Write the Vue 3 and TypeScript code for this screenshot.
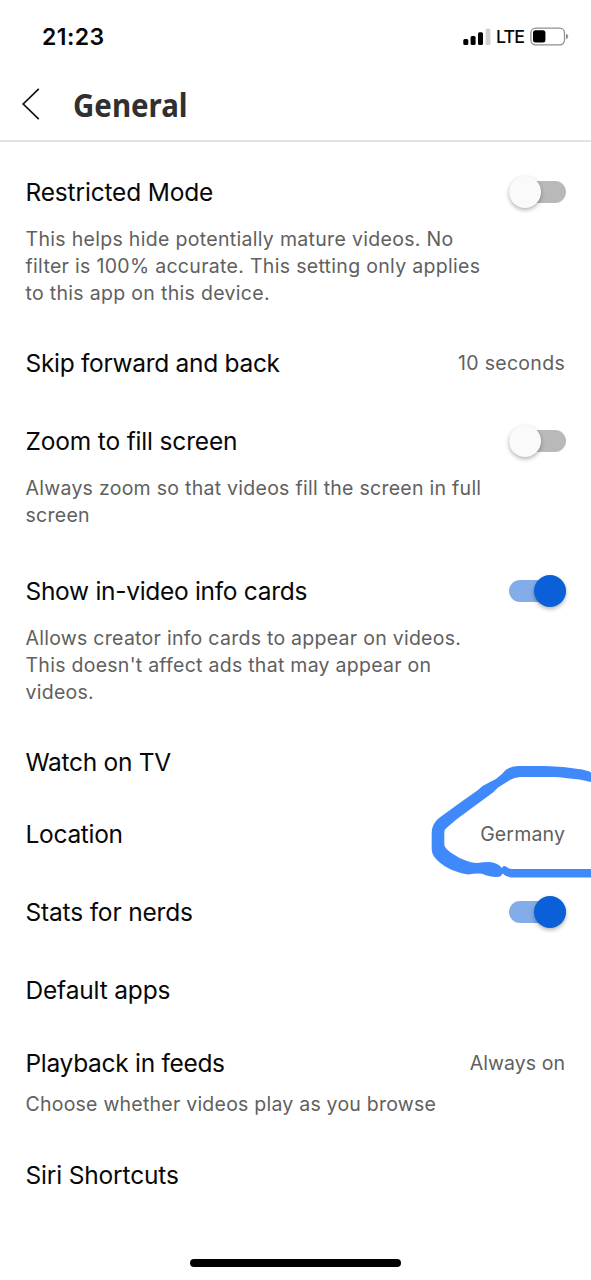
<script setup lang="ts">
interface Setting {
  id: string
  title: string
  lines?: string[]
  value?: string
  on?: boolean
}

const settings: Setting[] = [
  {
    id: 'restricted',
    title: 'Restricted Mode',
    lines: [
      'This helps hide potentially mature videos. No',
      'filter is 100% accurate. This setting only applies',
      'to this app on this device.',
    ],
    on: false,
  },
  { id: 'skip', title: 'Skip forward and back', value: '10 seconds' },
  {
    id: 'zoom',
    title: 'Zoom to fill screen',
    lines: ['Always zoom so that videos fill the screen in full', 'screen'],
    on: false,
  },
  {
    id: 'cards',
    title: 'Show in-video info cards',
    lines: [
      'Allows creator info cards to appear on videos.',
      "This doesn't affect ads that may appear on",
      'videos.',
    ],
    on: true,
  },
  { id: 'tv', title: 'Watch on TV' },
  { id: 'location', title: 'Location', value: 'Germany' },
  { id: 'stats', title: 'Stats for nerds', on: true },
  { id: 'apps', title: 'Default apps' },
  {
    id: 'playback',
    title: 'Playback in feeds',
    lines: ['Choose whether videos play as you browse'],
    value: 'Always on',
  },
  { id: 'siri', title: 'Siri Shortcuts' },
]
</script>

<template>
  <main class="screen">
    <div class="status">
      <span class="clock">21:23</span>
      <div class="indicators">
        <svg class="signal" width="28" height="18" viewBox="0 0 28 18">
          <rect x="0.3" y="11" width="5" height="6" rx="1.5" />
          <rect x="7.6" y="8" width="5" height="9" rx="1.5" />
          <rect x="15" y="4.2" width="5" height="12.8" rx="1.5" />
          <rect x="22.6" y="0.5" width="4.8" height="16.5" rx="1.5" fill="#d2d2d2" />
        </svg>
        <span class="network">LTE</span>
        <svg class="battery" width="39" height="20" viewBox="0 0 39 20">
          <rect x="0.9" y="1.2" width="33.6" height="16.6" rx="4.7" fill="none" stroke="#909090" stroke-width="1.3" />
          <rect x="3" y="3.3" width="12.4" height="12.2" rx="2.5" />
          <path d="M36 6.8 Q38.2 7.5 38.2 9.4 Q38.2 11.3 36 12.2Z" fill="#909090" />
        </svg>
      </div>
    </div>

    <header class="header">
      <svg class="back" width="20" height="34" viewBox="0 0 20 34">
        <path d="M16.8 1.8 L1.2 17 L16.8 32.2" fill="none" stroke="#111" stroke-width="1.7" />
      </svg>
      <h1>General</h1>
    </header>

    <section class="settings">
      <article v-for="s in settings" :key="s.id" class="row" :class="s.id">
        <div class="heading">
          <h2>{{ s.title }}</h2>
          <span v-if="s.value" class="value">{{ s.value }}</span>
          <span v-if="s.on !== undefined" class="switch" :class="{ on: s.on }"><i></i></span>
        </div>
        <div v-if="s.lines" class="description">
          <p v-for="line in s.lines" :key="line">{{ line }}</p>
        </div>
      </article>
    </section>

    <svg class="ink" width="181" height="140" viewBox="0 0 181 140">
      <path
        d="M181 32 Q170 29 157 28.3 Q150 27 143 27 L110 27 Q104 27.3 100 30 L88 37.5 L83 42.5 L68 53.5 L47 69 L37 77.5 Q34.3 79 34.3 82 L34.3 95 Q35 99 43 104 Q50 109 57 111 Q62 113 67 113 Q73 112 80 112 Q88 113 92 118 Q93 115 96 116.5 Q99 119 102 119 L181 119 L181 127.5 L102 127.5 Q96 127 92.5 123.5 Q91 127.5 86 127 Q80 127 72 123.7 Q66 123 58 124.5 Q49 123 42 120 Q33 116 27 110 Q21.7 105 21.7 99 L21.7 83 Q21.7 74 29 68 L50 52.7 L68 40 Q73 35 80 32 Q87 29 92 24 Q97 16.5 108 16 L135 16 Q155 16.5 168 19 Q177 20 181 22.5 Z"
        fill="#4089fb"
      />
    </svg>
    <div class="home-bar"></div>
  </main>
</template>

<style>
body {
  margin: 0;
  background: #fff;
}
</style>

<style scoped>
.screen {
  position: relative;
  width: 591px;
  height: 1280px;
  overflow: hidden;
  background: #fff;
  color: #080808;
  font-family: Inter, "Liberation Sans", sans-serif;
}
.status {
  height: 74px;
  display: flex;
  align-items: center;
  justify-content: space-between;
  padding: 0 22px 0 42px;
  box-sizing: border-box;
}
.clock {
  font-size: 23px;
  font-weight: 600;
  letter-spacing: 0.45px;
}
.indicators {
  display: flex;
  align-items: center;
  height: 20px;
  margin-top: -1px;
}
.signal {
  margin-right: 5px;
}
.network {
  width: 28px;
  margin-right: 6px;
  font-size: 17.8px;
  font-weight: 500;
  letter-spacing: -0.9px;
}
.header {
  height: 68px;
  box-sizing: border-box;
  padding: 0 22px;
  display: flex;
  align-items: center;
  border-bottom: 2px solid #e4e4e4;
}
.back {
  margin-top: -7px;
}
h1 {
  margin: -4px 0 0 31px;
  font-family: "Noto Sans", sans-serif;
  font-size: 32px;
  line-height: 40px;
  font-weight: 700;
  color: #303030;
  transform: scaleX(0.92);
  transform-origin: left center;
}
.settings {
  padding: 34.6px 26px 0 25.5px;
}
.row {
  height: 78px;
}
.restricted,
.cards {
  height: 171px;
}
.zoom {
  height: 150px;
}
.tv {
  height: 72px;
}
.apps {
  height: 73px;
}
.playback {
  height: 112px;
}
.heading {
  height: 30px;
  display: flex;
  align-items: center;
  justify-content: space-between;
}
h2 {
  margin: 0;
  font-size: 24.5px;
  line-height: 30px;
  font-weight: 400;
  letter-spacing: -0.3px;
  white-space: nowrap;
}
.restricted h2,
.zoom h2,
.apps h2,
.siri h2,
.stats h2 {
  letter-spacing: -0.17px;
}
.value {
  font-size: 19.5px;
  line-height: 30px;
  color: #606060;
  letter-spacing: 0.3px;
}
.location .value {
  letter-spacing: 0.15px;
}
.playback .value {
  letter-spacing: 0.05px;
}
.description {
  padding-top: 19.9px;
  font-size: 19.5px;
  line-height: 26.8px;
  letter-spacing: 0.31px;
  color: #606060;
  white-space: nowrap;
}
.zoom .description,
.cards .description {
  letter-spacing: 0.27px;
}
.playback .description {
  padding-top: 13.9px;
  letter-spacing: 0.23px;
}
p {
  margin: 0;
}
.switch {
  display: flex;
  align-items: center;
  width: 57px;
  height: 22px;
  margin-right: -0.5px;
  border-radius: 11px;
  background: #b9b9b9;
}
.switch i {
  width: 32px;
  height: 32px;
  flex: none;
  border-radius: 50%;
  background: #fafafa;
  box-shadow: 0 2px 4px rgba(0, 0, 0, 0.3);
}
.switch.on {
  justify-content: flex-end;
  background: #83ade9;
}
.switch.on i {
  background: #0b5fd7;
}
.ink {
  position: absolute;
  left: 410px;
  top: 750px;
}
.home-bar {
  position: absolute;
  left: 190px;
  top: 1259px;
  width: 211px;
  height: 8px;
  border-radius: 4px;
  background: #000;
}
</style>
